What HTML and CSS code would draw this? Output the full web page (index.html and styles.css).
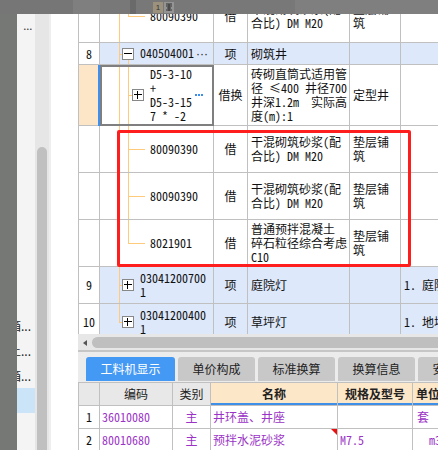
FILE: index.html
```html
<!DOCTYPE html>
<html lang="zh-CN">
<head>
<meta charset="utf-8">
<title>工料机</title>
<link rel="stylesheet" href="styles.css">
</head>
<body>
<div class="screen">
  <div class="shade"></div>
  <aside class="sidebar">
    <div class="side-list">
      <div class="side-top">
        <div class="side-mark">_</div>
        <div class="side-mark">_...</div>
      </div>
      <div class="side-item"><span>配电箱...</span></div>
      <div class="side-item"><span>施工土...</span></div>
      <div class="side-item"><span>检查箱...</span></div>
      <div class="side-item selected"></div>
    </div>
    <div class="side-scroll"><div class="side-thumb"></div></div>
    <div class="side-edge"></div>
  </aside>
  <div class="gutter"></div>

  <main class="main">
    <div class="grid-wrap">
      <table class="grid">
        <colgroup>
          <col class="w-no"><col class="w-code"><col class="w-type"><col class="w-name"><col class="w-spec"><col class="w-desc">
        </colgroup>
        <tbody>
          <tr class="h53">
            <td class="no"></td>
            <td class="code"><i class="tl v1"></i><i class="tl v2 up"></i><i class="tl hb"></i><div class="cell leaf">80090390</div></td>
            <td class="type">借</td>
            <td class="name">干混砌筑砂浆(配<br>合比) DM M20</td>
            <td class="spec">垫层铺<br>筑</td>
            <td class="desc"></td>
          </tr>
          <tr class="h22 hl">
            <td class="no">8</td>
            <td class="code"><i class="tl v1"></i><i class="tl ha"></i><i class="tl v2 below-box"></i><div class="cell l1"><span class="tbox minus"></span><span>040504001<span class="dots">···</span></span></div></td>
            <td class="type">项</td>
            <td class="name">砌筑井</td>
            <td class="spec"></td>
            <td class="desc"></td>
          </tr>
          <tr class="h61">
            <td class="no cur"></td>
            <td class="code"><i class="tl v1"></i><i class="tl v2"></i><i class="tl hs"></i><div class="cell l2"><span class="tbox plus"></span><span>D5-3-10<br>+<br>D5-3-15<br>7 * -2</span></div><span class="more"><b></b><b></b><b></b></span><span class="frame"></span></td>
            <td class="type">借换</td>
            <td class="name">砖砌直筒式适用管<br>径 ≤400 井径700<br>井深1.2m&nbsp; 实际高<br>度(m):1</td>
            <td class="spec">定型井</td>
            <td class="desc"></td>
          </tr>
          <tr class="h47">
            <td class="no"></td>
            <td class="code"><i class="tl v1"></i><i class="tl v2"></i><i class="tl hb"></i><div class="cell leaf">80090390</div></td>
            <td class="type">借</td>
            <td class="name">干混砌筑砂浆(配<br>合比) DM M20</td>
            <td class="spec">垫层铺<br>筑</td>
            <td class="desc"></td>
          </tr>
          <tr class="h47">
            <td class="no"></td>
            <td class="code"><i class="tl v1"></i><i class="tl v2"></i><i class="tl hb"></i><div class="cell leaf">80090390</div></td>
            <td class="type">借</td>
            <td class="name">干混砌筑砂浆(配<br>合比) DM M20</td>
            <td class="spec">垫层铺<br>筑</td>
            <td class="desc"></td>
          </tr>
          <tr class="h47">
            <td class="no"></td>
            <td class="code"><i class="tl v1"></i><i class="tl v2 up"></i><i class="tl hb"></i><div class="cell leaf">8021901</div></td>
            <td class="type">借</td>
            <td class="name">普通预拌混凝土<br>碎石粒径综合考虑<br>C10</td>
            <td class="spec">垫层铺<br>筑</td>
            <td class="desc"></td>
          </tr>
          <tr class="h37 hl">
            <td class="no">9</td>
            <td class="code"><i class="tl v1"></i><i class="tl ha"></i><div class="cell l1"><span class="tbox plus"></span><span>03041200700<br>1</span></div></td>
            <td class="type">项</td>
            <td class="name">庭院灯</td>
            <td class="spec"></td>
            <td class="desc">1. 庭院灯</td>
          </tr>
          <tr class="h37 hl">
            <td class="no">10</td>
            <td class="code"><i class="tl v1 up"></i><i class="tl ha"></i><div class="cell l1"><span class="tbox plus"></span><span>03041200400<br>1</span></div></td>
            <td class="type">项</td>
            <td class="name">草坪灯</td>
            <td class="spec"></td>
            <td class="desc">1. 地坪灯</td>
          </tr>
        </tbody>
      </table>
    </div>

    <div class="hscroll"><span class="harrow"></span><span class="hthumb"></span></div>

    <div class="tabbar">
      <div class="tab active">工料机显示</div>
      <div class="tab">单价构成</div>
      <div class="tab">标准换算</div>
      <div class="tab">换算信息</div>
      <div class="tab">安装费用</div>
    </div>

    <table class="detail">
      <colgroup>
        <col class="d-no"><col class="d-code"><col class="d-kind"><col class="d-name"><col class="d-spec"><col class="d-unit">
      </colgroup>
      <thead>
        <tr>
          <th class="no"></th>
          <th>编码</th>
          <th>类别</th>
          <th class="hot">名称</th>
          <th class="hot">规格及型号</th>
          <th class="hot left">单位</th>
        </tr>
      </thead>
      <tbody>
        <tr>
          <td class="no">1</td>
          <td class="p">36010080</td>
          <td class="p c">主</td>
          <td class="p">井环盖、井座</td>
          <td class="p"></td>
          <td class="p unit">套</td>
        </tr>
        <tr>
          <td class="no">2</td>
          <td class="p">80010680</td>
          <td class="p c">主</td>
          <td class="p note">预拌水泥砂浆</td>
          <td class="p">M7.5</td>
          <td class="p unit m3">m3</td>
        </tr>
      </tbody>
    </table>
  </main>

  <div class="topband">
    <span class="tb w73"></span>
    <span class="tb w27 lt"></span>
    <span class="tb w30"></span>
    <span class="tb w6 dk"></span>
    <span class="tb w17"></span>
    <span class="tb-ico one">1</span>
    <span class="tb-ico two"><svg width="8" height="9" viewBox="0 0 8 9"><path d="M1 1h6M1 3h6M2 5h4M1 7h6M4 1v7" stroke="#333" stroke-width="1" fill="none"/></svg></span>
    <span class="tb w120"></span>
    <span class="tb rest lt"></span>
  </div>
  <div class="redbox"></div>
</div>
</body>
</html>
```

FILE: styles.css
```css
* { box-sizing: border-box; }

body {
  margin: 0;
  width: 438px;
  height: 450px;
  overflow: hidden;
  background: #fff;
  font-family: "Noto Sans Mono CJK SC", "Noto Sans CJK SC", sans-serif;
  font-size: 12px;
  color: #111;
}

.screen {
  position: relative;
  display: flex;
  width: 438px;
  height: 450px;
  overflow: hidden;
}

.shade {
  width: 17px;
  flex: none;
  background: #767876;
}

/* sidebar */
.sidebar {
  width: 34px;
  flex: none;
  display: flex;
}
.side-list {
  width: 18px;
  background: #f4f4f4;
  display: flex;
  flex-direction: column;
  overflow: hidden;
  font-family: "Noto Sans CJK SC", sans-serif;
}
.side-top {
  height: 313px;
  padding-top: 12px;
  color: #333;
  line-height: 9px;
  font-size: 11px;
}
.side-mark { white-space: nowrap; overflow: hidden; }
.side-item {
  height: 25px;
  display: flex;
  align-items: center;
  justify-content: flex-end;
  overflow: hidden;
  padding-right: 4px;
  white-space: nowrap;
  color: #222;
}
.side-item.selected { background: #cce4f7; }
.side-scroll {
  width: 14px;
  background: #e6e6e6;
  padding-top: 147px;
  display: flex;
  flex-direction: column;
  align-items: center;
}
.side-thumb {
  width: 10px;
  flex: 1;
  background: #c0c0c0;
  border-radius: 5px 5px 0 0;
}
.side-edge {
  width: 2px;
  background: #eeeeee;
}
.gutter {
  width: 27px;
  flex: none;
  background: #fff;
}

/* main */
.main {
  width: 360px;
  flex: none;
  display: flex;
  flex-direction: column;
  overflow: hidden;
}
.grid-wrap {
  height: 334px;
  flex: none;
  overflow: hidden;
}

.grid, .detail {
  border-collapse: separate;
  border-spacing: 0;
  table-layout: fixed;
}
.grid {
  width: 383px;
  margin-top: -10px;
}
.w-no { width: 22px; }
.w-code { width: 114px; }
.w-type { width: 34px; }
.w-name { width: 102px; }
.w-spec { width: 51px; }
.w-desc { width: 60px; }

.grid td {
  position: relative;
  border-right: 1px solid #c0c0c0;
  border-bottom: 1px solid #c0c0c0;
  padding: 0 2px 0 3px;
  vertical-align: middle;
  line-height: 14px;
  white-space: nowrap;
}
.grid td.no {
  border-left: 1px solid #c0c0c0;
  text-align: center;
  padding: 0;
}
.grid td.code { padding: 0; }
.grid td.type { text-align: center; padding: 0; }
.grid td.desc { overflow: hidden; }

.h53 { height: 53px; }
.h22 { height: 22px; }
.h61 { height: 61px; }
.h47 { height: 47px; }
.h37 { height: 37px; }

.grid tr.hl td { background: #dde8fb; }
.grid tr.hl td.no { background: #fff; }
.grid td.cur { background: #fde6c8; }

.dots {
  font-family: "Liberation Sans", sans-serif;
  font-size: 12px;
  margin-left: 2px;
  color: #222;
}

/* tree lines */
.tl {
  position: absolute;
  display: block;
  background: #ffca7c;
}
.tl.v1 { left: 19px; top: 0; bottom: 0; width: 1px; }
.tl.v2 { left: 28px; top: 0; bottom: 0; width: 1px; }
.tl.up { bottom: 50%; }
.tl.below-box { top: calc(50% + 6px); }
.tl.ha { left: 19px; width: 3px; top: 50%; height: 1px; }
.tl.hs { left: 28px; width: 4px; top: 50%; height: 1px; }
.tl.hb { left: 28px; width: 17px; top: 50%; height: 1px; }

.cell {
  display: flex;
  align-items: center;
}
.cell.l1 { padding-left: 22px; }
.cell.l2 { padding-left: 32px; }
.cell.leaf { padding-left: 50px; }

.tbox {
  position: relative;
  flex: none;
  width: 12px;
  height: 12px;
  border: 1px solid #888;
  background: #fff;
  margin-right: 6px;
}
.tbox::before {
  content: "";
  position: absolute;
  left: 1px;
  top: 4px;
  width: 8px;
  height: 1px;
  background: #000;
}
.tbox.plus::after {
  content: "";
  position: absolute;
  left: 4px;
  top: 0;
  width: 1px;
  height: 8px;
  margin-top: 1px;
  background: #000;
}

.more {
  position: absolute;
  right: 10px;
  top: 50%;
  margin-top: -1px;
  display: flex;
  gap: 1px;
}
.more b {
  width: 2px;
  height: 2px;
  background: #3b8eea;
}
.frame {
  position: absolute;
  left: 0;
  top: 0;
  right: -1px;
  bottom: -1px;
  border: 2px solid #7f7f7f;
}
.frame::before {
  content: "";
  position: absolute;
  left: -4px;
  top: -2px;
  bottom: -2px;
  width: 2px;
  background: #3d8ff0;
}

/* horizontal scrollbar */
.hscroll {
  height: 18px;
  flex: none;
  display: flex;
  align-items: flex-start;
  padding-top: 3px;
  background: #e7e7e7;
  border-bottom: 2px solid #c6c6c6;
}
.harrow {
  width: 0;
  height: 0;
  margin: 3px 5px 0 5px;
  border-top: 3px solid transparent;
  border-bottom: 3px solid transparent;
  border-right: 4px solid #555;
}
.hthumb {
  flex: 1;
  height: 11px;
  background: #bfbfbf;
  border-radius: 6px 0 0 6px;
}

/* tabs */
.tabbar {
  height: 30px;
  flex: none;
  display: flex;
  gap: 3px;
  padding: 5px 0 1px 8px;
  background: #ececec;
  font-family: "Noto Sans CJK SC", sans-serif;
}
.tab {
  flex: none;
  width: 77px;
  height: 24px;
  line-height: 24px;
  text-align: center;
  white-space: nowrap;
  overflow: hidden;
  background: #c8c8c8;
  color: #222;
  border-radius: 3px 3px 0 0;
}
.tab.active {
  width: 89px;
  background: #4499f4;
  color: #fff;
}

/* detail table */
.detail { width: 395px; }
.d-no { width: 22px; }
.d-code { width: 73px; }
.d-kind { width: 38px; }
.d-name { width: 127px; }
.d-spec { width: 75px; }
.d-unit { width: 60px; }

.detail th, .detail td {
  position: relative;
  border-right: 1px solid #c0c0c0;
  border-bottom: 1px solid #c0c0c0;
  white-space: nowrap;
  vertical-align: middle;
  line-height: 14px;
  font-size: 12px;
}
.detail th {
  height: 24px;
  border-top: 1px solid #c0c0c0;
  background: #e8e8e8;
  font-weight: normal;
  font-family: "Noto Sans CJK SC", sans-serif;
  text-align: center;
  padding: 0;
  color: #222;
}
.detail th.hot {
  background: #fde7c9;
  font-weight: bold;
  box-shadow: inset 0 -2px 0 #3d8fe8;
}
.detail th.left { text-align: left; padding-left: 3px; }
.detail .no {
  border-left: 1px solid #c0c0c0;
  text-align: center;
  padding: 0;
}
.detail td { height: 23px; }
.detail td.p {
  color: #9b34c6;
  padding: 0 0 0 2px;
}
.detail td.c { text-align: center; padding: 0; }
.detail td.unit { padding-left: 4px; }
.detail td.m3 { padding-left: 16px; }
.detail td.note::after {
  content: "";
  position: absolute;
  top: 0;
  right: 0;
  border-top: 6px solid #e81010;
  border-left: 6px solid transparent;
}

/* overlays */
.topband {
  position: absolute;
  left: 0;
  top: 0;
  width: 438px;
  height: 14px;
  display: flex;
  background: #787878;
}
.tb { height: 14px; flex: none; }
.tb.w73 { width: 73px; background: #767676; }
.tb.w27 { width: 27px; }
.tb.w30 { width: 30px; }
.tb.w6 { width: 6px; }
.tb.w17 { width: 17px; }
.tb.w120 { width: 120px; }
.tb.rest { flex: 1; }
.tb.lt { background: #7f7f7f; }
.tb.dk { background: #6a6a6a; }
.tb-ico {
  flex: none;
  width: 10px;
  height: 11px;
  margin: 2px 1px 0 0;
  font-family: "Liberation Sans", sans-serif;
  font-size: 8px;
  line-height: 11px;
  text-align: center;
  color: #333;
}
.tb-ico.one { background: #9c917d; }
.tb-ico.two {
  background: #949494;
  display: flex;
  align-items: center;
  justify-content: center;
}

.redbox {
  position: absolute;
  left: 117px;
  top: 130px;
  width: 294px;
  height: 137px;
  border: 3px solid #ff1e1e;
  border-radius: 2px;
}
```
